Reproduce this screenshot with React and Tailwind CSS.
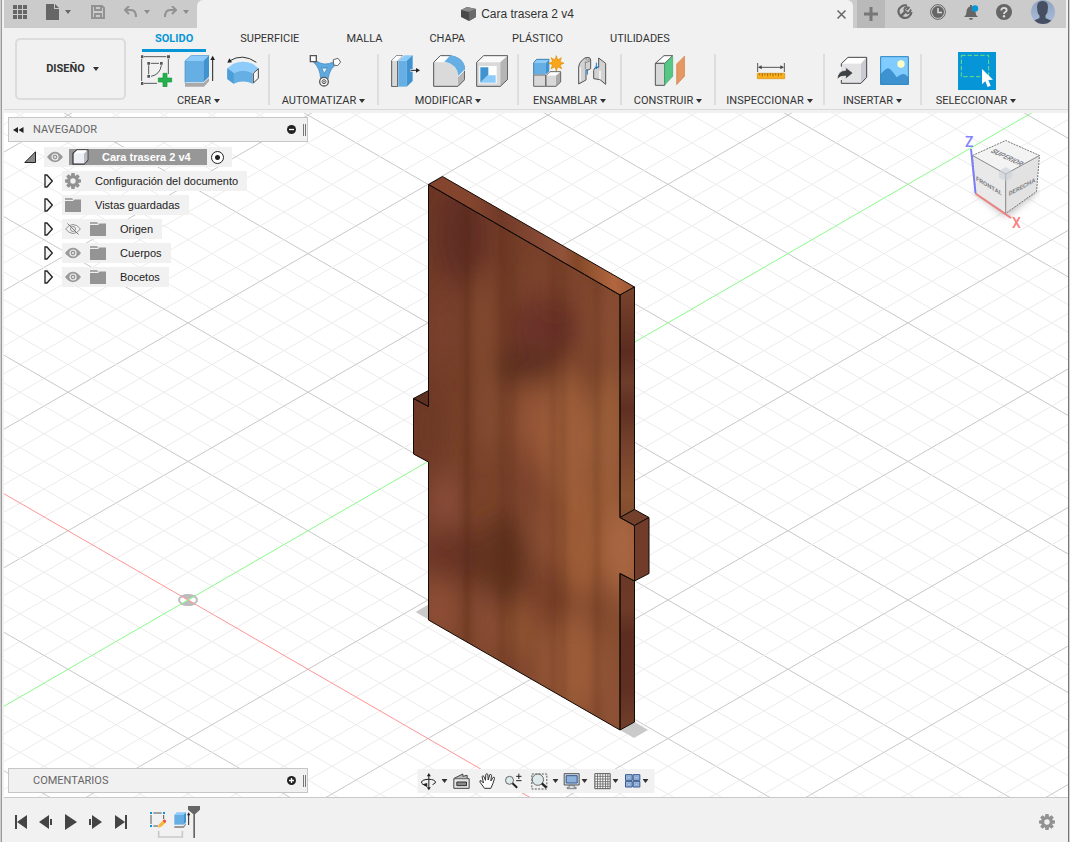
import { useState } from "react";

const ORIGIN = { x: 188, y: 600 };
const SLOPE = 0.5774;
const STEP = 27.71;

const tabs = ["SOLIDO", "SUPERFICIE", "MALLA", "CHAPA", "PLÁSTICO", "UTILIDADES"];

function Caret({ className = "fill-[#333]" }) {
  return (
    <svg width="6" height="4" viewBox="0 0 6 4" className={className} aria-hidden="true">
      <path d="M0 0h6L3 4z" />
    </svg>
  );
}

function Icon({ box, size = 32, children }) {
  return (
    <svg width={size} height={size} viewBox={box} className="block shrink-0" aria-hidden="true">
      {children}
    </svg>
  );
}

/* ---------- Ribbon icons ---------- */

function SketchIcon() {
  return (
    <Icon box="426 165 96 96">
      <g fill="none" stroke="#5a5a5a" strokeWidth="3">
        <path d="M434 170H502M428 177V243M508 177V222M434 250H474M449 196V223M455 190H480M487 196Q483 224 456 229" />
      </g>
      <g fill="#555">
        <path d="M424 166h9v9h-9zM504 166h9v9h-9zM424 246h9v9h-9zM445 186h8v8h-8zM483 186h8v8h-8zM445 225h8v8h-8z" />
      </g>
      <path d="M492 220h12v14h14v12h-14v14h-12v-14h-14v-12h14z" fill="#24b04b" stroke="#15913a" strokeWidth="2" />
    </Icon>
  );
}

function ExtrudeIcon() {
  return (
    <Icon box="552 165 96 96">
      <path d="M555 249H610L627 234V244L612 260H555z" fill="#a9a9a9" />
      <path d="M555 183L574 166H627L610 183z" fill="#8dcbfa" />
      <path d="M555 183H610V247H555z" fill="#66afe5" />
      <path d="M610 183L627 166V230L610 247z" fill="#3f93d0" />
      <path d="M555 248V183L574 166H627" fill="none" stroke="#4a8fc4" strokeWidth="2" />
      <path d="M638 243V178" stroke="#222" strokeWidth="3" />
      <path d="M638 167l7 13h-14z" fill="#222" />
    </Icon>
  );
}

function RevolveIcon() {
  return (
    <Icon box="681 165 96 96">
      <path d="M682 205L700 191Q729 179 758 191L776 205L758 219Q729 205 701 219z" fill="#8dcbfa" />
      <path d="M682 205L701 219Q729 205 758 219V251Q729 238 701 251L682 237z" fill="#66afe5" />
      <path d="M682 205L701 219V251L682 237z" fill="#4d9dd8" />
      <path d="M760 220L775 206V235L760 249z" fill="#f4f4f4" stroke="#444" strokeWidth="3" />
      <path d="M769 187Q728 158 688 183" fill="none" stroke="#333" strokeWidth="3" />
      <path d="M682 188l6-13 8 12z" fill="#222" />
    </Icon>
  );
}

function AutomateIcon() {
  return (
    <Icon box="127 30 96 96">
      <path d="M146 46Q172 66 202 50L208 60Q190 68 184 102H162Q160 68 141 52z" fill="#5ea9df" stroke="#3180b8" strokeWidth="2" />
      <path d="M165 68Q173 71 182 68L173 86z" fill="#f1f1f1" stroke="#3180b8" strokeWidth="2" />
      <path d="M131 32h18v18h-18z" fill="#fff" stroke="#555" strokeWidth="4" />
      <path d="M200 44l14-4 8 11-9 11-12-2z" fill="#fff" stroke="#666" strokeWidth="3" />
      <circle cx="172" cy="110" r="13" fill="#fff" stroke="#555" strokeWidth="4" />
      <circle cx="172" cy="110" r="6" fill="#fff" stroke="#555" strokeWidth="3" />
      <path d="M169 110h6M172 107v6" stroke="#555" strokeWidth="2" />
    </Icon>
  );
}

function PressPullIcon() {
  return (
    <Icon box="375 30 96 96">
      <path d="M380 47L394 32H412L398 47V125H380z" fill="#d8d8d8" stroke="#555" strokeWidth="3" />
      <path d="M380 47L394 32H412L398 47z" fill="#fff" />
      <path d="M400 47H425V125H400z" fill="#66afe5" />
      <path d="M400 47L418 31H443L425 47z" fill="#8dcbfa" />
      <path d="M425 47L443 31V108L425 125z" fill="#3f93d0" />
      <path d="M436 76H456" stroke="#f1f1f1" strokeWidth="8" />
      <path d="M437 76H456" stroke="#222" strokeWidth="3" />
      <path d="M465 76l-12-7v14z" fill="#222" />
    </Icon>
  );
}

function FilletIcon() {
  return (
    <Icon box="504 30 96 96">
      <path d="M506 52L526 32H556L542 52z" fill="#fff" />
      <path d="M506 52H540Q577 58 579 96V124H506z" fill="#dadada" />
      <path d="M579 96L599 76V104L579 124z" fill="#b5b5b5" />
      <path d="M506 52L526 32H556Q599 40 599 76V104L579 124H506z" fill="none" stroke="#555" strokeWidth="3" />
      <path d="M538 50L556 31Q600 38 600 74L580 94Q577 57 538 50z" fill="#66afe5" />
      <path d="M580 94L600 74" stroke="#fff" strokeWidth="3" />
    </Icon>
  );
}

function ShellIcon() {
  return (
    <Icon box="633 30 96 96">
      <path d="M635 52L656 32H728L706 52z" fill="#fafafa" />
      <path d="M635 52H706V124H635z" fill="#dadada" />
      <path d="M706 52L728 32V103L706 124z" fill="#b5b5b5" />
      <path d="M635 52L656 32H728V103L706 124H635z" fill="none" stroke="#555" strokeWidth="3" />
      <path d="M643 63H695V115H643z" fill="#fff" />
      <path d="M646 67H670V90L646 113z" fill="#3f93d0" />
      <path d="M646 113L669 91H692V113z" fill="#8dcbfa" />
    </Icon>
  );
}

function NewComponentIcon() {
  return (
    <Icon box="39 75 96 96">
      <path d="M41 98L50 88H88L78 98z" fill="#8dcbfa" />
      <path d="M41 98H78V133H41z" fill="#66afe5" />
      <path d="M78 98L88 88V124L78 133z" fill="#3f93d0" />
      <path d="M41 134V98L50 88H88" fill="none" stroke="#3b7fb3" strokeWidth="3" />
      <path d="M41 135H77V169H41z" fill="#d8d8d8" stroke="#666" strokeWidth="3" />
      <path d="M78 136L90 125H122L109 136z" fill="#fff" />
      <path d="M78 137H108V169H78z" fill="#d8d8d8" />
      <path d="M108 137L122 125V156L108 169z" fill="#aaa" />
      <path d="M78 169V137L90 125H122V156L108 169z" fill="none" stroke="#666" strokeWidth="3" />
      <path
        d="M109 77l4 13 11-7-4 12 12 5-12 4 5 12-12-6-4 13-4-13-12 6 5-12-12-4 12-5-5-12 12 7z"
        fill="#f9a61a"
        stroke="#e08b00"
        strokeWidth="2"
      />
    </Icon>
  );
}

function JointIcon() {
  return (
    <Icon box="168 75 96 96">
      <path d="M176 110Q176 100 188 89L196 83H208Q212 85 212 90V116L204 120H198V150L176 162z" fill="#d2d2d2" stroke="#555" strokeWidth="3" />
      <path d="M196 94V118M212 92L197 98" stroke="#666" strokeWidth="2" />
      <path d="M181 112V154" stroke="#f2f2f2" strokeWidth="4" />
      <ellipse cx="203" cy="87" rx="6" ry="3" fill="#fff" stroke="#555" strokeWidth="2" />
      <path d="M202 119V134" stroke="#0a7fd4" strokeWidth="3" />
      <path d="M236 84L257 100V163L240 149L221 146V122Q221 114 229 112H236z" fill="#d2d2d2" stroke="#555" strokeWidth="3" />
      <path d="M240 122V148" stroke="#fff" strokeWidth="4" />
      <path d="M229 98V115" stroke="#0a7fd4" strokeWidth="3" />
      <path d="M223 110h12l-6 8z" fill="#0a7fd4" />
    </Icon>
  );
}

function PlaneIcon() {
  return (
    <Icon box="396 75 96 96">
      <path d="M403 100L429 77H455L431 100z" fill="#fff" stroke="#555" strokeWidth="3" />
      <path d="M403 100H431V166H403z" fill="#d8d8d8" stroke="#555" strokeWidth="3" />
      <path d="M431 101L455 79V139L431 165z" fill="#57c785" stroke="#3ea86a" strokeWidth="2" />
      <path d="M467 102L491 78V138L467 164z" fill="#e59862" stroke="#d0804a" strokeWidth="2" />
    </Icon>
  );
}

function MeasureIcon() {
  return (
    <Icon box="702 75 96 96">
      <path d="M710 99V126M790 99V126M714 112H786" stroke="#555" strokeWidth="3" />
      <path d="M711 112l11-6v12zM789 112l-11-6v12z" fill="#444" />
      <path d="M709 130H791V146H709z" fill="#fbaf1b" stroke="#d98c00" strokeWidth="2" />
      <path d="M716 130v6M724 130v9M732 130v6M740 130v9M748 130v6M756 130v9M764 130v6M772 130v9M780 130v6" stroke="#6b4a00" strokeWidth="2" />
    </Icon>
  );
}

function InsertIcon() {
  return (
    <Icon box="108 165 96 96">
      <path d="M124 191L144 172H200L183 191z" fill="#fff" />
      <path d="M124 191H183V250H124z" fill="#e3e3e6" />
      <path d="M183 191L200 172V232L183 250z" fill="#c9c9d2" />
      <path d="M124 200V191L144 172H200V232L183 250H124V240" fill="none" stroke="#444" strokeWidth="3" />
      <path d="M111 238Q114 211 137 211V202L159 219L137 237V228Q121 227 111 238z" fill="#3d4045" stroke="#f1f1f1" strokeWidth="2" />
    </Icon>
  );
}

function CanvasIcon() {
  return (
    <Icon box="237 165 96 96">
      <path d="M241 169H326V254H241z" fill="#80ccff" />
      <path d="M241 224Q257 205 264 205Q272 205 290 232Q303 222 311 222Q317 222 326 233V254H241z" fill="#3d92cf" />
      <circle cx="303" cy="192" r="11" fill="#ffffc4" />
      <path d="M242 170H325V253H242z" fill="none" stroke="#2d86c4" strokeWidth="3" />
    </Icon>
  );
}

function SelectIcon() {
  return (
    <Icon box="471 156 114 114" size={38}>
      <path d="M471 156H585V270H471z" fill="#0696d7" />
      <path d="M481 166H563V230H481z" fill="none" stroke="#6fe07d" strokeWidth="3" strokeDasharray="13 6" />
      <path d="M543 207V253L553 244L560 261L569 257L562 240L576 239z" fill="#fff" />
    </Icon>
  );
}

const groups = [
  { label: "CREAR", width: "w-[139px]", icons: [SketchIcon, ExtrudeIcon, RevolveIcon] },
  { label: "AUTOMATIZAR", width: "w-[107px]", icons: [AutomateIcon] },
  { label: "MODIFICAR", width: "w-[138px]", icons: [PressPullIcon, FilletIcon, ShellIcon] },
  { label: "ENSAMBLAR", width: "w-[101px]", icons: [NewComponentIcon, JointIcon] },
  { label: "CONSTRUIR", width: "w-[92px]", icons: [PlaneIcon] },
  { label: "INSPECCIONAR", width: "w-[107px]", icons: [MeasureIcon] },
  { label: "INSERTAR", width: "w-[95px]", icons: [InsertIcon, CanvasIcon] },
  { label: "SELECCIONAR", width: "w-[108px]", icons: [SelectIcon] },
];

/* ---------- Small icons ---------- */

function Gear() {
  return (
    <svg width="16" height="16" viewBox="-8 -8 16 16" aria-hidden="true">
      <circle r="4.2" fill="none" stroke="#929292" strokeWidth="3" />
      {[0, 45, 90, 135, 180, 225, 270, 315].map((a) => (
        <path key={a} d="M-1.6 -8h3.2l.5 3.4h-4.2z" fill="#929292" transform={`rotate(${a})`} />
      ))}
    </svg>
  );
}

function Eye({ hidden }) {
  return (
    <svg width="16" height="12" viewBox="0 0 16 12" fill="none" aria-hidden="true">
      {hidden ? (
        <g stroke="#929292">
          <path d="M.6 6Q4 1.5 8 1.5T15.4 6Q12 10.5 8 10.5T.6 6z" />
          <circle cx="8" cy="6" r="2.5" />
          <path d="M2.5 .5L13.5 11.5" stroke="#777" />
        </g>
      ) : (
        <>
          <path d="M0 6Q4 .8 8 .8T16 6Q12 11.2 8 11.2T0 6z" fill="#999" />
          <circle cx="8" cy="6" r="3" stroke="#f1f1f1" strokeWidth="1.2" />
          <circle cx="8" cy="6" r="1" fill="#f1f1f1" />
        </>
      )}
    </svg>
  );
}

function Folder() {
  return (
    <svg width="16" height="14" viewBox="0 0 16 14" aria-hidden="true">
      <path d="M0 0H7L8.500 2H0z" fill="#a9a9a9" />
      <path d="M0 3H8L9.500 1.500H16V14H0z" fill="#949494" />
    </svg>
  );
}

function Body() {
  return (
    <svg width="17" height="16" viewBox="0 0 17 16" aria-hidden="true">
      <path d="M1 4.500L5 .8H15.800V11L12 15.200H1z" fill="#eef0f5" stroke="#333" strokeWidth="1.200" />
      <path d="M12 15V4.500L15.500 1V11z" fill="#b9bbc2" />
      <path d="M1.800 4.300L5.200 1.300H15L12 4.300z" fill="#fff" />
    </svg>
  );
}

/* ---------- Title bar ---------- */

function IconButton({ label, className = "", children }) {
  return (
    <button type="button" aria-label={label} className={`flex items-center justify-center ${className}`}>
      {children}
    </button>
  );
}

function TitleBar() {
  return (
    <header className="mr-0.5 flex h-7 bg-[#cbcbcb]">
      <div className="flex w-[193px] shrink-0 items-center pb-1 pl-2">
        <IconButton label="Panel de datos" className="w-4">
          <svg width="14" height="14" viewBox="0 0 14 14" fill="#666">
            <path d="M0 0h4v4H0zM5 0h4v4H5zM10 0h4v4h-4zM0 5h4v4H0zM5 5h4v4H5zM10 5h4v4h-4zM0 10h4v4H0zM5 10h4v4H5zM10 10h4v4h-4z" />
          </svg>
        </IconButton>
        <IconButton label="Archivo" className="ml-[18px] gap-[6px]">
          <svg width="13" height="16" viewBox="0 0 13 16" fill="#666">
            <path d="M0 0H8V5H13V16H0zM9 0L13 4H9z" />
          </svg>
          <Caret className="fill-[#666]" />
        </IconButton>
        <IconButton label="Guardar" className="ml-5">
          <svg width="14" height="14" viewBox="0 0 14 14" fill="none" stroke="#929292" strokeWidth="2">
            <path d="M1 1H11L13 3V13H1zM4 1V5H10V1M4 13V9H10V13" />
          </svg>
        </IconButton>
        <IconButton label="Deshacer" className="ml-[19px] gap-[7px]">
          <svg width="13" height="12" viewBox="0 0 13 12" fill="none" stroke="#929292" strokeWidth="2">
            <path d="M5 0L1 4L5 8M1 4H7Q12 4 12 11" />
          </svg>
          <Caret className="fill-[#8c8c8c]" />
        </IconButton>
        <IconButton label="Rehacer" className="ml-[14px] gap-[6px]">
          <svg width="13" height="12" viewBox="0 0 13 12" fill="none" stroke="#929292" strokeWidth="2">
            <path d="M8 0L12 4L8 8M12 4H6Q1 4 1 11" />
          </svg>
          <Caret className="fill-[#8c8c8c]" />
        </IconButton>
      </div>

      <div className="relative flex min-w-0 flex-1 items-center justify-center rounded-t-md bg-[#f1f1f1]">
        <h1 className="flex items-center gap-1 pr-4 font-['Liberation_Sans',sans-serif] text-xs text-[#333]">
          <svg width="17" height="16" viewBox="0 0 17 16" aria-hidden="true">
            <path d="M1 4L7 1L16 3V11L9 15L1 11z" fill="#4a4a4a" />
            <path d="M1 4L7 1L16 3L9 6z" fill="#8a8a8a" />
            <path d="M9 6L16 3V11L9 15z" fill="#6a6a6a" />
          </svg>
          Cara trasera 2 v4
        </h1>
        <IconButton label="Cerrar" className="absolute right-[7px] size-[9px]">
          <svg width="9" height="9" viewBox="0 0 9 9" stroke="#666" strokeWidth="1.500">
            <path d="M.5 .5L8.500 8.500M8.500 .5L.5 8.500" />
          </svg>
        </IconButton>
      </div>

      <IconButton label="Nuevo diseño" className="ml-1 w-7 bg-[#b9b9b9]">
        <svg width="14" height="14" viewBox="0 0 14 14" fill="#777">
          <path d="M5.500 0h3v5.500h5.500v3h-5.500v5.500h-3v-5.500H0v-3h5.500z" />
        </svg>
      </IconButton>
      <div className="flex w-[181px] shrink-0 items-center pb-1 pl-[3px]">
        <IconButton label="Extensiones" className="w-[33px]">
          <svg width="16" height="16" viewBox="0 0 16 16" fill="none" stroke="#666">
            <path d="M2.500 4A6.500 6.500 0 1 0 14.500 8" strokeWidth="2.200" />
            <path d="M2.500 4.500A7 7 0 0 1 10 1.400" strokeWidth="2" />
            <path d="M3.500 12.500L8 8" strokeWidth="2.500" />
            <path d="M7 6L10.500 9.500L12.500 8.500L14 5.500M7 6L8 4L10.500 2.500M9.500 6L12.500 3" strokeWidth="1.800" />
          </svg>
        </IconButton>
        <IconButton label="Estado de trabajos" className="w-[33px]">
          <svg width="16" height="16" viewBox="0 0 16 16">
            <circle cx="8" cy="8" r="7.400" fill="none" stroke="#666" />
            <circle cx="8" cy="8" r="6" fill="#666" />
            <path d="M8 4V8.500H12" fill="none" stroke="#ddd" strokeWidth="1.500" />
          </svg>
        </IconButton>
        <IconButton label="Notificaciones" className="w-[33px]">
          <svg width="16" height="17" viewBox="0 0 16 17" fill="#666">
            <path d="M1 13Q3.500 11.500 3.500 8Q3.500 3.500 7 2.500V1H9V2.500Q12.500 3.500 12.500 8Q12.500 11.500 15 13zM6 14H10Q9.500 16 8 16T6 14z" />
            <circle cx="12" cy="4.500" r="3.200" fill="#0696d7" />
          </svg>
        </IconButton>
        <IconButton label="Ayuda" className="w-[33px]">
          <svg width="16" height="16" viewBox="0 0 16 16">
            <circle cx="8" cy="8" r="8" fill="#666" />
            <path d="M5.300 6.500Q5.300 3.800 8 3.800T10.700 6.200Q10.700 7.300 9.300 8Q8 8.700 8 10" fill="none" stroke="#ddd" strokeWidth="1.800" />
            <circle cx="8" cy="12.200" r="1.200" fill="#ddd" />
          </svg>
        </IconButton>
        <IconButton label="Cuenta" className="w-[45px]">
          <svg width="24" height="24" viewBox="0 0 24 24">
            <defs>
              <clipPath id="avatar"><circle cx="12" cy="12" r="12" /></clipPath>
              <linearGradient id="avatarBg" x2="0" y2="1">
                <stop stopColor="#8fa3c0" />
                <stop offset="1" stopColor="#a9bddc" />
              </linearGradient>
            </defs>
            <g clipPath="url(#avatar)">
              <path d="M0 0H24V24H0z" fill="url(#avatarBg)" />
              <path d="M6 7Q6 1 11.500 1T17 7L16.500 12Q15.500 14.500 14.500 15.500V18L21 21V24H2V21L8.500 18V15.500Q7 14 6.500 12z" fill="#465062" />
            </g>
          </svg>
        </IconButton>
      </div>
    </header>
  );
}

/* ---------- Ribbon ---------- */

function Ribbon() {
  const [active, setActive] = useState("SOLIDO");

  return (
    <div className="bg-[#f1f1f1] pb-[3px]">
      <div className="flex border-b border-[#dadada] pb-px">
        <button
          type="button"
          className="mt-[10px] ml-[11px] flex h-[62px] w-[111px] shrink-0 items-center justify-center gap-2 rounded-[5px] border-2 border-[#dcdcdc] pl-1 font-bold"
        >
          DISEÑO
          <Caret />
        </button>
        <div className="ml-[3px] min-w-0">
          <nav className="ml-[13px] flex gap-[21px]">
            {tabs.map((tab) => (
              <button
                key={tab}
                type="button"
                onClick={() => setActive(tab)}
                className={`h-6 border-b-[3px] px-[13px] pt-px leading-[14px] ${
                  tab === active
                    ? "border-[#0696d7] font-bold text-[#0696d7]"
                    : "border-transparent"
                }`}
              >
                {tab}
              </button>
            ))}
          </nav>
          <div className="mt-0.5 flex">
            {groups.map(({ label, width, icons }, i) => (
              <div key={label} className="flex">
                {i > 0 && <div className="h-[51px] w-0.5 bg-[#dedede]" />}
                <div className={`flex flex-col items-center pt-px ${width}`}>
                  <div className="flex h-8 items-center gap-[11px] pl-0.5">
                    {icons.map((Glyph, n) => (
                      <Glyph key={n} />
                    ))}
                  </div>
                  <button type="button" className="mt-[7px] flex items-center gap-[3px] leading-[14px]">
                    {label}
                    <Caret />
                  </button>
                </div>
              </div>
            ))}
          </div>
        </div>
      </div>
    </div>
  );
}

/* ---------- Scene ---------- */

// Each patch of grain: x, y, rx, ry, colour, opacity
const grain = [
  [462, 235, 26, 50, "#5c2b22", 0.7],
  [440, 325, 14, 40, "#84482f", 0.5],
  [482, 325, 14, 55, "#8a5034", 0.6],
  [560, 285, 34, 30, "#80442c", 0.6],
  [545, 328, 36, 32, "#652f26", 0.75],
  [525, 368, 34, 14, "#4e2418", 0.8],
  [596, 375, 14, 26, "#6c3824", 0.5],
  [608, 325, 20, 50, "#8a5034", 0.7],
  [490, 410, 16, 45, "#884e32", 0.7],
  [532, 430, 18, 50, "#98593a", 0.8],
  [566, 440, 22, 70, "#a3633c", 0.85],
  [608, 440, 20, 70, "#a0613b", 0.8],
  [425, 430, 20, 50, "#6b3625", 0.7],
  [445, 505, 14, 32, "#905140", 0.7],
  [450, 555, 28, 30, "#622f22", 0.7],
  [502, 562, 32, 46, "#582b1e", 0.75],
  [525, 480, 18, 36, "#7a3f2d", 0.6],
  [545, 540, 18, 36, "#8a4e35", 0.7],
  [582, 540, 26, 55, "#a2603a", 0.8],
  [624, 550, 18, 50, "#ac6a44", 0.9],
  [438, 608, 18, 32, "#94533b", 0.75],
  [545, 598, 24, 32, "#773c2a", 0.75],
  [485, 618, 14, 30, "#8c5036", 0.7],
  [520, 630, 18, 34, "#955832", 0.6],
  [512, 670, 26, 14, "#7a3f2c", 0.6],
  [572, 665, 30, 50, "#9e5d38", 0.85],
  [604, 610, 16, 30, "#80482b", 0.6],
  [610, 700, 16, 34, "#8d5136", 0.7],
];

const seams = [
  [467, 6, 0.45],
  [502, 6, 0.3],
  [512, 5, 0.25],
  [553, 5, 0.3],
  [563, 6, 0.25],
  [597, 6, 0.25],
];

function Scene() {
  const ks = Array.from({ length: 71 }, (_, i) => i - 35);
  const front =
    "M428.500 184.500L620 295V517.500L634.500 525.500V581L620 573.500V730L428.500 620V462L413.500 454V398.500L428.500 406.500z";

  return (
    <svg
      className="absolute inset-0 size-full bg-white"
      viewBox="4 113 1064 684"
      preserveAspectRatio="xMidYMid slice"
      role="img"
      aria-label="Vista del modelo"
    >
      <defs>
        <clipPath id="frontClip"><path d={front} /></clipPath>
        <filter id="soft" x="-50%" y="-50%" width="200%" height="200%">
          <feGaussianBlur stdDeviation="10 14" />
        </filter>
        <filter id="seam" x="-200%" width="500%">
          <feGaussianBlur stdDeviation="3 0" />
        </filter>
        <linearGradient id="wood" x1="0" y1="0" x2="1" y2="1">
          <stop stopColor="#6b3625" />
          <stop offset="0.5" stopColor="#7d452c" />
          <stop offset="1" stopColor="#8e5233" />
        </linearGradient>
        <linearGradient id="topEdge">
          <stop stopColor="#84442d" />
          <stop offset="0.200" stopColor="#84452f" />
          <stop offset="0.350" stopColor="#713a28" />
          <stop offset="0.650" stopColor="#91523a" />
          <stop offset="0.720" stopColor="#834828" />
          <stop offset="0.900" stopColor="#b1663f" />
          <stop offset="1" stopColor="#9c5835" />
        </linearGradient>
        <linearGradient id="sideEdge" gradientUnits="userSpaceOnUse" x1="620" y1="287" x2="628" y2="722">
          <stop stopColor="#7a442d" />
          <stop offset="0.070" stopColor="#6c3926" />
          <stop offset="0.150" stopColor="#5b2c20" />
          <stop offset="0.220" stopColor="#6f3d2a" />
          <stop offset="0.280" stopColor="#602f22" />
          <stop offset="0.360" stopColor="#75412c" />
          <stop offset="0.480" stopColor="#8a5331" />
          <stop offset="0.640" stopColor="#6a3827" />
          <stop offset="0.740" stopColor="#6e3b28" />
          <stop offset="0.800" stopColor="#5c2d20" />
          <stop offset="0.920" stopColor="#5f2f22" />
          <stop offset="1" stopColor="#6f3c29" />
        </linearGradient>
      </defs>

      {/* Ground grid */}
      {ks.filter((k) => k !== 0).map((k) => {
        const major = k % 5 === 0;
        const y = ORIGIN.y + k * STEP;
        return (
          <path
            key={k}
            d={`M-12 ${y - 200 * SLOPE}L1088 ${y + 900 * SLOPE}M-12 ${y + 200 * SLOPE}L1088 ${y - 900 * SLOPE}`}
            stroke={major ? "#c8c8c8" : "#ececec"}
          />
        );
      })}
      <path d={`M-12 ${600 - 200 * SLOPE}L1088 ${600 + 900 * SLOPE}`} stroke="#ff9494" />
      <path d={`M-12 ${600 + 200 * SLOPE}L1088 ${600 - 900 * SLOPE}`} stroke="#8afa8a" />
      <ellipse cx="188" cy="600" rx="9" ry="5" fill="none" stroke="#bcbcbc" strokeWidth="2" />
      <path d="M188 600L181 595.500Q188 593 195 595.500zM188 600L181 604.500Q188 607 195 604.500z" fill="#bcbcbc" />
      <path d="M182 596.500L194 603.500" stroke="#ff9c9c" />
      <path d="M182 603.500L194 596.500" stroke="#92fa92" />

      {/* Contact shadow */}
      <path d="M415.500 612L428.500 604.500V619.500zM620 730L634 721.500L648 730L634 738z" fill="#cacaca" />

      {/* Panel */}
      <path d={front} fill="url(#wood)" />
      <g clipPath="url(#frontClip)">
        <g filter="url(#soft)">
          {grain.map(([x, y, rx, ry, fill, opacity], i) => (
            <ellipse key={i} cx={x} cy={y} rx={rx} ry={ry} fill={fill} opacity={opacity} />
          ))}
        </g>
        {seams.map(([x, w, opacity]) => (
          <rect key={x} x={x - w / 2} y="170" width={w} height="570" fill="#532818" opacity={opacity} filter="url(#seam)" />
        ))}
      </g>
      <g stroke="#120a07" strokeLinejoin="round">
        <path d="M428.500 184.500L442.500 176.500L634.500 287L620 295z" fill="url(#topEdge)" />
        <path d="M620 295L634.500 287V509.500L620 517.500z" fill="url(#sideEdge)" />
        <path d="M620 573.500L634.500 581V722L620 730z" fill="url(#sideEdge)" />
        <path d="M620 517.500L634.500 509.500L649 517.500L634.500 525.500z" fill="#73402b" />
        <path d="M634.500 525.500L649 517.500V573.500L634.500 581z" fill="#713c29" />
        <path d="M413.500 398.500L428.500 390.500V406.500z" fill="#5e3020" />
        <path d={front} fill="none" />
      </g>
    </svg>
  );
}

function ViewCube() {
  return (
    <button type="button" aria-label="ViewCube" className="absolute top-5 right-7">
      <svg width="80" height="100" viewBox="960 133 80 100">
        <defs>
          <filter id="cubeShadow" x="-50%" y="-50%" width="200%" height="200%">
            <feGaussianBlur stdDeviation="4" />
          </filter>
        </defs>
        <path d="M974 190L1006 216L1038 190L1006 180z" fill="#777" opacity="0.600" filter="url(#cubeShadow)" />
        <path d="M972.500 155.500L1005.700 140.500L1039.500 155.500L1005.700 174z" fill="#f3f3f3" />
        <path d="M972.500 155.500L1005.700 174V213.500L975.500 193.500z" fill="#e9e9e9" />
        <path d="M1005.700 174L1039.500 155.500L1036.500 191.500L1005.700 213.500z" fill="#e2e2e2" />
        <path d="M972.500 155.500L1005.700 140.500L1039.500 155.500L1036.500 191.500L1005.700 213.500L975.500 193.500z" fill="none" stroke="#777" strokeDasharray="2 1" />
        <path d="M972.500 155.500L1005.700 174L1039.500 155.500M1005.700 174V213.500" fill="none" stroke="#888" />
        <path d="M999 171L1005.700 167L1012 171V178L1005.700 181L999 178z" fill="#ccd2d8" opacity="0.600" />
        <g fill="#7d8084" fontFamily="Roboto, sans-serif" fontWeight="700" fontSize="7" textAnchor="middle">
          <text transform="translate(1005 159) rotate(25) skewX(-30)">SUPERIOR</text>
          <text transform="translate(989 188) skewY(31)" fontSize="6">FRONTAL</text>
          <text transform="translate(1022 189) skewY(-28)" fontSize="6">DERECHA</text>
        </g>
        <path d="M971 149L975.500 193" stroke="#7d7dfa" strokeWidth="2" />
        <path d="M975.500 193.500L1011 218" stroke="#f08080" strokeWidth="2" />
        <text x="965" y="147" fill="#8484fa" fontFamily="Roboto, sans-serif" fontWeight="500" fontSize="14">Z</text>
        <text x="1012" y="228" fill="#fa8080" fontFamily="Roboto, sans-serif" fontWeight="500" fontSize="14">X</text>
      </svg>
    </button>
  );
}

/* ---------- Browser tree ---------- */

const nodes = [
  { name: "Configuración del documento", icon: "gear" },
  { name: "Vistas guardadas", icon: "folder" },
  { name: "Origen", icon: "folder", eye: "off" },
  { name: "Cuerpos", icon: "folder", eye: "on" },
  { name: "Bocetos", icon: "folder", eye: "on" },
];

function PanelBar({ title, open }) {
  return (
    <div className="flex h-[25px] w-[300px] items-center border border-[#c6c6c6] bg-[#f1f1f1] text-[#666]">
      <div className="w-6 pl-1">
        {open && (
          <svg width="11" height="6" viewBox="0 0 11 6" fill="#222" aria-hidden="true">
            <path d="M5 0V6L0 3zM10.500 0V6L5.500 3z" />
          </svg>
        )}
      </div>
      <h2 className="flex-1">{title}</h2>
      <IconButton label={open ? "Contraer" : "Expandir"} className="mr-[7px]">
        <svg width="9" height="9" viewBox="0 0 9 9">
          <circle cx="4.500" cy="4.500" r="4.500" fill="#222" />
          <path d={open ? "M2 4.500H7" : "M2 4.500H7M4.500 2V7"} stroke="#fff" strokeWidth="1.300" />
        </svg>
      </IconButton>
      <div className="mr-px h-3 w-[3px] border-x border-[#777]" />
    </div>
  );
}

function Browser() {
  return (
    <section className="relative w-[300px]">
      <PanelBar title="NAVEGADOR" open />
      <ul className="mt-[5px] flex flex-col gap-1 font-['Liberation_Sans',sans-serif] text-[#222]">
        <li className="flex h-5 items-center pl-4">
          <svg width="12" height="12" viewBox="0 0 12 12" aria-hidden="true">
            <path d="M11.500 .8V11.500H.8z" fill="#8a8a8a" stroke="#222" />
          </svg>
          <div className="ml-2 flex h-5 items-center bg-[#f1f1f1] pr-2 pl-[3px]">
            <Eye />
            <div className="ml-[6px] flex h-4 items-center gap-[13px] bg-[#979797] pr-4 pl-[3px] font-bold text-white">
              <Body />
              Cara trasera 2 v4
            </div>
            <input
              type="radio"
              defaultChecked
              aria-label="Activar componente"
              className="ml-1 size-[13px] appearance-none rounded-full border border-[#222] bg-[radial-gradient(circle,#222_2px,#fff_3px)]"
            />
          </div>
        </li>
        {nodes.map((node) => (
          <li key={node.name} className="flex h-5 items-center pl-9">
            <svg width="9" height="14" viewBox="0 0 9 14" aria-hidden="true">
              <path d="M1 1L3 1L8.300 7L3 13H1z" fill="#f4f4f4" stroke="#222" strokeWidth="1.300" />
            </svg>
            <div className="ml-[9px] flex h-5 items-center bg-[#f1f1f1] pr-[9px] pl-[3px]">
              {node.eye && (
                <span className="mr-[9px]">
                  <Eye hidden={node.eye === "off"} />
                </span>
              )}
              {node.icon === "gear" ? <Gear /> : <Folder />}
              <span className="ml-[14px]">{node.name}</span>
            </div>
          </li>
        ))}
      </ul>
    </section>
  );
}

/* ---------- Navigation bar ---------- */

function NavBar() {
  return (
    <div className="absolute bottom-1 left-1/2 flex h-6 w-[237px] -translate-x-1/2 items-center bg-[#f1f1f1]">
      <IconButton label="Órbita" className="gap-[2px]">
        <Icon box="21 29 66 66" size={22}>
          <path d="M55 43V84" stroke="#222" strokeWidth="3" />
          <path d="M55 38l6 10H49zM55 90l6-9H49z" fill="#222" />
          <path d="M66 73Q76 69 75 65Q72 57 55 57Q36 57 33 65Q33 74 50 75" fill="none" stroke="#222" strokeWidth="3" />
          <path d="M36 72l14-4v13z" fill="#222" />
        </Icon>
        <Caret />
      </IconButton>
      <IconButton label="Mirar a" className="ml-[3px]">
        <Icon box="120 29 66 66" size={22}>
          <path d="M130 55H176V84H130z" fill="#e6e6e6" stroke="#444" strokeWidth="3" />
          <path d="M139 65H168V76H139z" fill="#8a8a8a" stroke="#333" strokeWidth="3" />
          <path d="M131 54L157 41V48L170 45V54" fill="#bbb" stroke="#444" strokeWidth="3" />
        </Icon>
      </IconButton>
      <IconButton label="Encuadre" className="ml-1">
        <Icon box="198 29 66 66" size={22}>
          <path
            d="M222 84L209 66Q206 60 212 61L219 68L215 49Q216 44 220 48L225 60L226 42Q229 38 232 42L233 59L238 43Q242 40 243 45L241 62L248 51Q253 49 252 55Q247 72 241 84z"
            fill="#fff"
            stroke="#333"
            strokeWidth="3"
          />
        </Icon>
      </IconButton>
      <IconButton label="Zoom" className="ml-1">
        <Icon box="276 29 66 66" size={22}>
          <circle cx="297" cy="60" r="12" fill="#dcebea" stroke="#666" strokeWidth="3" />
          <path d="M306 69L320 82" stroke="#222" strokeWidth="6" />
          <path d="M317 48H333M325 40V56M317 61H333" stroke="#222" strokeWidth="3" />
        </Icon>
      </IconButton>
      <IconButton label="Ajustar" className="ml-1 gap-[2px]">
        <Icon box="354 29 66 66" size={22}>
          <path d="M364 41H409V86H364z" fill="none" stroke="#555" strokeWidth="3" strokeDasharray="6 4" />
          <circle cx="382" cy="58" r="17" fill="#dcebea" stroke="#666" strokeWidth="3" />
          <path d="M394 69L408 82" stroke="#222" strokeWidth="7" />
        </Icon>
        <Caret />
      </IconButton>
      <IconButton label="Configuración de visualización" className="ml-1 gap-px">
        <Icon box="459 35 54 54" size={18}>
          <path d="M464 40H509V74H464z" fill="#d5dbe2" stroke="#555" strokeWidth="3" />
          <path d="M470 46H503V68H470z" fill="#8fb2dd" stroke="#34588c" strokeWidth="3" />
          <path d="M479 75H494V81H500V85H473V81H479z" fill="#d5dbe2" stroke="#555" strokeWidth="2" />
        </Icon>
        <Caret />
      </IconButton>
      <IconButton label="Rejilla" className="ml-[6px] gap-px">
        <Icon box="552 35 54 54" size={18}>
          <path d="M556 40H602V85H556z" fill="#fff" stroke="#555" strokeWidth="3" />
          <path d="M564 40V85M572 40V85M580 40V85M588 40V85M595 40V85M556 48H602M556 56H602M556 64H602M556 71H602M556 78H602" stroke="#666" strokeWidth="2.500" />
        </Icon>
        <Caret />
      </IconButton>
      <IconButton label="Ventanas" className="ml-[5px] gap-px">
        <Icon box="643 35 54 54" size={18}>
          <path d="M649 43H669V60H649zM672 43H692V60H672zM649 63H669V80H649zM672 63H692V80H672z" fill="#9dbbe2" stroke="#35588c" strokeWidth="3" />
          <path d="M655 49H663V55H655zM678 49H686V55H678zM655 69H663V75H655zM678 69H686V75H678z" fill="#c3d6ee" stroke="#7496c6" strokeWidth="2" />
        </Icon>
        <Caret />
      </IconButton>
    </div>
  );
}

/* ---------- Timeline ---------- */

const playback = [
  ["Inicio", "M2 1H4V15H2zM4 8L14 1V15z"],
  ["Paso atrás", "M1 8L11 1V15zM12 5H14V11H12z"],
  ["Reproducir", "M2 0L14 8L2 16z"],
  ["Paso adelante", "M1 5H3V11H1zM4 1L14 8L4 15z"],
  ["Fin", "M2 1L12 8L2 15zM12 1H14V15H12z"],
];

function Timeline() {
  return (
    <footer className="flex h-[45px] shrink-0 items-center border-t border-[#c9c9c9] bg-[#f1f1f1] pt-1 pr-[13px] pl-1">
      {playback.map(([label, d]) => (
        <IconButton key={label} label={label} className="w-[25px]">
          <svg width="16" height="16" viewBox="0 0 16 16" fill="#444">
            <path d={d} />
          </svg>
        </IconButton>
      ))}
      <svg width="54" height="34" viewBox="447 138 162 102" className="ml-4" aria-hidden="true">
        <path d="M460 162H485M453 168V195M460 201H474M491 168V180" stroke="#555" strokeWidth="3" />
        <path d="M450 159h6v6h-6zM489 159h6v6h-6zM450 198h6v6h-6z" fill="#0696d7" />
        <path d="M474 206L477 196L491 183L498 190L484 203z" fill="#f5b73c" />
        <path d="M488 185L493 181L499 186L495 192z" fill="#e44" />
        <path d="M523 201H550L558 192V198L551 207H523z" fill="#999" />
        <path d="M523 168L530 160H558L550 168z" fill="#8dcbfa" />
        <path d="M523 168H550V197H523z" fill="#66afe5" />
        <path d="M550 168L558 160V190L550 197z" fill="#3f93d0" />
        <path d="M566 168V198" stroke="#222" strokeWidth="3" />
        <path d="M566 160l5 9h-10z" fill="#222" />
        <path d="M476 216V234H547V216" fill="none" stroke="#c9c9c9" strokeWidth="5" />
        <path d="M564 141H600V152L585 166V237H580V166L564 152z" fill="#666" />
      </svg>
      <IconButton label="Preferencias" className="ml-auto">
        <Gear />
      </IconButton>
    </footer>
  );
}

export default function App() {
  return (
    <div className="h-screen border-x border-[#cfcfcf] font-['Roboto',sans-serif] text-[11px] leading-[14px] text-[#333]">
      <div className="flex h-full flex-col border-r border-l border-r-[#777] border-l-[#999] bg-[#f1f1f1] pl-0.5">
        <TitleBar />
        <Ribbon />
        <main className="relative flex min-h-0 flex-1 flex-col justify-between overflow-hidden p-1">
          <Scene />
          <Browser />
          <ViewCube />
          <div className="relative w-[300px]">
            <PanelBar title="COMENTARIOS" />
          </div>
          <NavBar />
        </main>
        <Timeline />
      </div>
    </div>
  );
}
